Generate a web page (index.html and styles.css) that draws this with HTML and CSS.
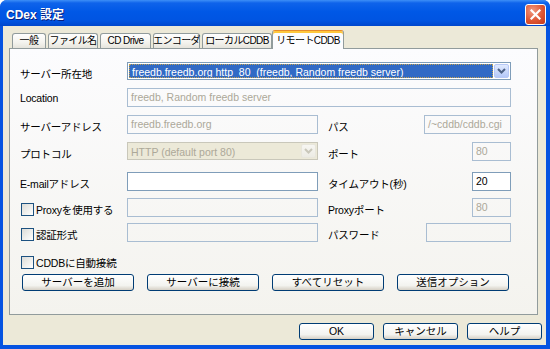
FILE: index.html
```html
<!DOCTYPE html>
<html lang="ja">
<head>
    <meta charset="UTF-8">
    <title>CDex 設定</title>
    <link rel="stylesheet" href="styles.css">
</head>
<body>

    <div class="window">
        <div class="titlebar">
            <span class="title">CDex 設定</span>
            <span class="close">
                <svg width="11" height="11" viewBox="0 0 11 11"><path d="M1.5 1.5 L9.5 9.5 M9.5 1.5 L1.5 9.5" stroke="#fff" stroke-width="2.2" stroke-linecap="square"/></svg>
            </span>
        </div>

        <div class="body">
            <div class="tabs">
                <div class="tab w1">一般</div>
                <div class="tab w2">ファイル名</div>
                <div class="tab w3">CD Drive</div>
                <div class="tab w4">エンコーダ</div>
                <div class="tab w5">ローカルCDDB</div>
                <div class="tab active">リモートCDDB</div>
            </div>

            <div class="panel">
                <div class="form">
                    <!-- サーバー所在地 -->
                    <div class="label">サーバー所在地</div>
                    <div class="combo focus wide">
                        <span class="combo-text">freedb.freedb.org http  80  (freedb, Random freedb server)</span>
                        <span class="arrow">
                            <svg width="9" height="6" viewBox="0 0 9 6"><path d="M1 1 L4.5 4.5 L8 1" fill="none" stroke="#4d6185" stroke-width="2"/></svg>
                        </span>
                    </div>

                    <div class="label">Location</div>
                    <div class="edit off wide">freedb, Random freedb server</div>

                    <div class="label">サーバーアドレス</div>
                    <div class="edit off">freedb.freedb.org</div>
                    <div class="right">
                        <span class="label">パス</span>
                        <div class="edit off path">/~cddb/cddb.cgi</div>
                    </div>

                    <div class="label">プロトコル</div>
                    <div class="combo off">
                        <span class="combo-text">HTTP (default port 80)</span>
                        <span class="arrow">
                            <svg width="9" height="6" viewBox="0 0 9 6"><path d="M1 1 L4.5 4.5 L8 1" fill="none" stroke="#c9c7ba" stroke-width="2"/></svg>
                        </span>
                    </div>
                    <div class="right">
                        <span class="label">ポート</span>
                        <div class="edit off small">80</div>
                    </div>

                    <div class="label">E-mailアドレス</div>
                    <div class="edit"></div>
                    <div class="right">
                        <span class="label">タイムアウト(秒)</span>
                        <div class="edit small">20</div>
                    </div>

                    <label class="check"><span class="box"></span>Proxyを使用する</label>
                    <div class="edit off"></div>
                    <div class="right">
                        <span class="label">Proxyポート</span>
                        <div class="edit off small">80</div>
                    </div>

                    <label class="check"><span class="box"></span>認証形式</label>
                    <div class="edit off"></div>
                    <div class="right">
                        <span class="label">パスワード</span>
                        <div class="edit off pass"></div>
                    </div>

                    <label class="check all"><span class="box"></span>CDDBに自動接続</label>
                </div>

                <div class="actions">
                    <button class="btn">サーバーを追加</button>
                    <button class="btn">サーバーに接続</button>
                    <button class="btn">すべてリセット</button>
                    <button class="btn">送信オプション</button>
                </div>
            </div>

            <div class="footer">
                <button class="btn">OK</button>
                <button class="btn">キャンセル</button>
                <button class="btn">ヘルプ</button>
            </div>
        </div>
    </div>

</body>
</html>
```

FILE: styles.css
```css
body {
    margin: 0;
    background: #fff;
    font-family: "Liberation Sans", "Noto Sans CJK JP", sans-serif;
    font-size: 10.5px;
    color: #000;
}
.window {
    width: 550px;
    height: 349px;
    background: #0553e1;
    border-radius: 7px 7px 0 0;
    display: flex;
    flex-direction: column;
    overflow: hidden;
}
.titlebar {
    height: 26px;
    flex: none;
    display: flex;
    align-items: center;
    justify-content: space-between;
    padding: 0 4px 0 6px;
    background: linear-gradient(#3d8ff7 0, #0f63ea 3px, #0058e6 45%, #0054e1 80%, #0047cc 100%);
}
.title {
    color: #fff;
    font-weight: bold;
    font-size: 12px;
    font-family: "Liberation Sans", "Noto Sans CJK JP", sans-serif;
    text-shadow: 1px 1px #0a1e7c;
    padding-top: 1px;
}
.close {
    width: 19px;
    height: 19px;
    border: 1px solid #fff;
    border-radius: 3px;
    background: radial-gradient(circle at 35% 30%, #f09a82, #de5634 55%, #c3391c);
    display: flex;
    align-items: center;
    justify-content: center;
    margin-top: 2px;
}
.body {
    flex: 1;
    margin: 0 4px 4px 3px;
    background: #ece9d8;
    padding: 5px 4px 5px 6px;
    display: flex;
    flex-direction: column;
}

/* tabs */
.tabs {
    height: 17px;
    display: flex;
    align-items: flex-end;
    gap: 2px;
    padding-left: 3px;
}
.tab {
    height: 15px;
    box-sizing: border-box;
    border: 1px solid #919b9c;
    border-bottom: none;
    border-radius: 3px 3px 0 0;
    background: linear-gradient(#fefefe, #f4f3ee 60%, #e6e4dc);
    display: flex;
    justify-content: center;
    line-height: 14px;
    font-size: 10px;
    letter-spacing: -0.6px;
    white-space: nowrap;
}
.w1 { width: 34px; }
.w2 { width: 50px; }
.w3 { width: 51px; }
.w4 { width: 47px; }
.w5 { width: 70px; }
.tab.active {
    width: 72px;
    height: 19px;
    margin-left: -2px;
    margin-bottom: -1px;
    background: #fcfcfe;
    border-top: 1px solid #e68b2c;
    box-shadow: inset 0 2px #ffc83c;
    line-height: 19px;
    position: relative;
    z-index: 1;
}

/* panel */
.panel {
    height: 267px;
    box-sizing: border-box;
    margin-right: 4px;
    border: 1px solid #919b9c;
    background: linear-gradient(#fcfcfe, #f4f3ee);
}
.form {
    display: grid;
    grid-template-columns: 107px 191px 193px;
    grid-template-rows: 26px 27px 27px 30px 26px 25px 29px 20px;
    padding: 13px 0 0 10px;
    align-items: start;
}
.label {
    padding-top: 4px;
    white-space: nowrap;
    letter-spacing: -0.2px;
}
.right {
    display: flex;
    justify-content: space-between;
    padding-left: 10px;
}
.wide {
    grid-column: 2 / 4;
}
.edit {
    height: 19px;
    box-sizing: border-box;
    border: 1px solid #7f9db9;
    background: #fff;
    padding: 0 3px;
    line-height: 17px;
    white-space: nowrap;
    overflow: hidden;
}
.edit.off {
    border-color: #a9bdd2;
    background: transparent;
    color: #aca899;
}
.path { width: 87px; }
.small { width: 39px; }
.pass { width: 85px; }

.combo {
    height: 18px;
    box-sizing: border-box;
    border: 1px solid #7f9db9;
    background: #fff;
    padding: 1px;
    display: flex;
    gap: 1px;
}
.combo-text {
    flex: 1;
    padding: 0 2px;
    line-height: 14px;
    white-space: pre;
    overflow: hidden;
}
.combo.focus .combo-text {
    background: #316ac5;
    color: #fff;
    border: 1px dotted #c0a050;
}
.arrow {
    width: 15px;
    box-sizing: border-box;
    border: 1px solid #b7c8f6;
    border-radius: 2px;
    background: linear-gradient(#e1eafe, #b4c8f8);
    display: flex;
    align-items: center;
    justify-content: center;
}
.combo.off {
    border-color: #c9c7ba;
    background: #ece9d8;
}
.combo.off .combo-text {
    color: #aca899;
    line-height: 16px;
}
.combo.off .arrow {
    border-color: #e8e6dc;
    background: linear-gradient(#f7f6f2, #ecebe4);
}

/* checkboxes */
.check {
    display: flex;
    align-items: center;
    gap: 2px;
    padding-top: 4px;
    white-space: nowrap;
    letter-spacing: -0.2px;
}
.check.all {
    grid-column: 1 / 4;
    padding-top: 3px;
}
.box {
    width: 13px;
    height: 13px;
    box-sizing: border-box;
    border: 1px solid #1c5180;
    background: linear-gradient(135deg, #dcdcd7, #fff);
    margin-left: 1px;
}

/* buttons */
.btn {
    height: 17px;
    box-sizing: border-box;
    border: 1px solid #003c74;
    border-radius: 3px;
    background: linear-gradient(#fff, #f3f3ef 70%, #d6d0c5);
    font-family: inherit;
    font-size: 10.5px;
    color: #000;
    padding: 0;
    line-height: 15px;
}
.actions {
    display: flex;
    gap: 13px;
    padding: 2px 0 0 12px;
}
.actions .btn {
    width: 112px;
}
.footer {
    display: flex;
    justify-content: flex-end;
    gap: 9px;
    margin-top: 8px;
}
.footer .btn {
    width: 75px;
}
```
